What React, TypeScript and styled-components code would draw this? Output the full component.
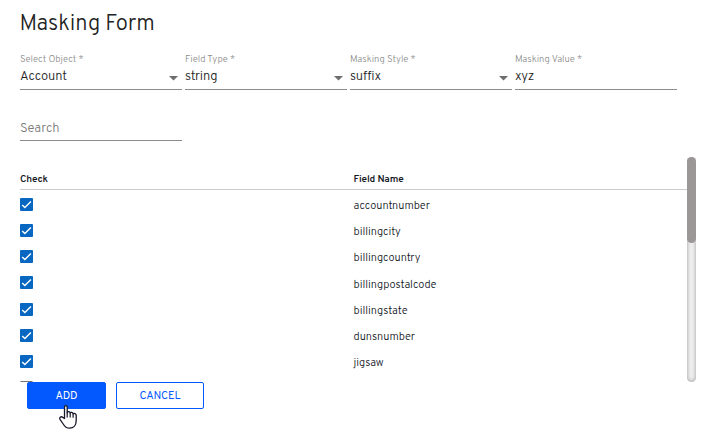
import React from "react";
import styled, { createGlobalStyle } from "styled-components";

const GlobalStyle = createGlobalStyle`
  * { box-sizing: border-box; }
  body {
    margin: 0;
    background: #fff;
    overflow: hidden;
    font-family: Overpass, Roboto, "Liberation Sans", sans-serif;
  }
`;

const Page = styled.main`
  width: 715px;
  height: 448px;
  padding: 10px 0 0 20px;
`;

const Title = styled.h1`
  margin: 0 0 0 -0.5px;
  height: 43px;
  line-height: 29px;
  font-size: 22px;
  font-weight: 300;
  letter-spacing: 0;
  color: #222;
`;

const FieldRow = styled.div`
  display: flex;
  gap: 3px;
`;

const Field = styled.div`
  width: 162px;
  height: 37px;
  padding-top: 1px;
  border-bottom: 1px solid #8c8c8c;
`;

const Label = styled.div`
  height: 14px;
  line-height: 13px;
  font-size: 9.5px;
  font-weight: 300;
  color: #8c8c8c;
`;

const Value = styled.div`
  display: flex;
  justify-content: space-between;
  height: 18px;
  line-height: 18px;
  font-size: 13px;
  font-weight: 300;
  letter-spacing: -0.12px;
  color: #222;
`;

const Arrow = styled.svg`
  display: block;
  margin: 8px 4px 0 0;
  fill: #6d6d6d;
`;

const Search = styled.div`
  width: 162px;
  height: 23px;
  margin-top: 28px;
  border-bottom: 1px solid #8c8c8c;
  font-size: 13px;
  font-weight: 300;
  line-height: 22px;
  color: #7a7a7a;
`;

const TablePanel = styled.section`
  display: flex;
  width: 676px;
  height: 225px;
  margin-top: 16px;
  overflow: hidden;
`;

const Table = styled.div`
  width: 667px;
`;

const HeaderRow = styled.div`
  display: grid;
  grid-template-columns: 333.5px 1fr;
  height: 33px;
  padding-top: 14px;
  border-bottom: 1px solid #c9cbcf;
  font-size: 10px;
  line-height: 18px;
  font-weight: 600;
  letter-spacing: -0.17px;
  color: #16191f;
`;

const Row = styled.div`
  display: grid;
  grid-template-columns: 333.5px 1fr;
  align-items: start;
  height: 26.15px;
  padding-top: 8px;
`;

const Name = styled.span`
  margin-top: 1.1px;
  font-size: 11px;
  font-weight: 300;
  line-height: 15px;
  letter-spacing: -0.02px;
  color: #10151c;
`;

const CheckBox = styled.span<{ $checked: boolean }>`
  display: block;
  width: 13px;
  height: 13px;
  border-radius: 1px;
  border: ${(p) => (p.$checked ? "0" : "1px solid #757575")};
  background: ${(p) => (p.$checked ? "#0867c1" : "#fff")};
  svg { display: block; }
`;

const ScrollTrack = styled.div`
  width: 9px;
  height: 225px;
  border-radius: 5px;
  background: #f1f0f0;
  box-shadow: inset 0 0 4px #999;
`;

const ScrollThumb = styled.div`
  height: 86px;
  border-radius: 5px;
  background: #9c9797;
`;

const Actions = styled.footer`
  display: flex;
  gap: 10px;
  padding-left: 7px;
`;

const Button = styled.button<{ $primary?: boolean }>`
  width: ${(p) => (p.$primary ? 79 : 88)}px;
  height: 27px;
  padding: 1px 0 0;
  border: 1px solid #0459fe;
  border-radius: 2px;
  background: ${(p) => (p.$primary ? "#0459fe" : "#fff")};
  color: ${(p) => (p.$primary ? "#fff" : "#0459fe")};
  font-family: inherit;
  font-size: 11px;
  line-height: 25px;
  letter-spacing: -0.1px;
`;

const Pointer = styled.svg`
  position: absolute;
  left: 58px;
  top: 404px;
`;

const fields = [
  { label: "Select Object *", value: "Account", menu: true },
  { label: "Field Type *", value: "string", menu: true },
  { label: "Masking Style *", value: "suffix", menu: true },
  { label: "Masking Value *", value: "xyz", menu: false },
];

const rows = [
  "accountnumber",
  "billingcity",
  "billingcountry",
  "billingpostalcode",
  "billingstate",
  "dunsnumber",
  "jigsaw",
];

export default function App() {
  return (
    <>
      <GlobalStyle />
      <Page>
        <Title>Masking Form</Title>
        <FieldRow>
          {fields.map((f) => (
            <Field key={f.label}>
              <Label>{f.label}</Label>
              <Value>
                <span>{f.value}</span>
                {f.menu && (
                  <Arrow width="9" height="5" viewBox="0 0 9 5">
                    <path d="M0 0H9L4.5 4.5Z" />
                  </Arrow>
                )}
              </Value>
            </Field>
          ))}
        </FieldRow>
        <Search>Search</Search>
        <TablePanel>
          <Table>
            <HeaderRow>
              <span>Check</span>
              <span>Field Name</span>
            </HeaderRow>
            {rows.map((name) => (
              <Row key={name}>
                <CheckBox $checked>
                  <svg width="13" height="13" viewBox="0 0 13 13">
                    <path d="M2.2 6.9 4.9 9.5 10.9 3.5" fill="none" stroke="#fff" strokeWidth="1.4" />
                  </svg>
                </CheckBox>
                <Name>{name}</Name>
              </Row>
            ))}
            <Row>
              <CheckBox $checked={false} />
            </Row>
          </Table>
          <ScrollTrack>
            <ScrollThumb />
          </ScrollTrack>
        </TablePanel>
        <Actions>
          <Button $primary>ADD</Button>
          <Button>CANCEL</Button>
        </Actions>
        <Pointer width="20" height="26" viewBox="0 0 20 26">
          <path
            d="M6.5 14.5V3.2C6.5 1 9.2 1 9.2 3.2V8.8C9.7 7.2 12 7.4 12.2 9C12.8 7.9 14.9 8.2 15.1 9.8C16.2 9 18.2 9.4 18.2 11.3V16.5C18.2 21.4 15.7 24.2 11.5 24.2C8 24.2 6.7 22.5 5.2 20L2 15.3C.9 13.6 2.9 12.1 4.4 13.1Z"
            fill="#fff"
            stroke="#16162a"
            strokeWidth="1.3"
            strokeLinejoin="round"
          />
          <path d="M9.2 8.5V13.5M12.2 9V13.5M15.1 9.8V13.8" fill="none" stroke="#16162a" strokeWidth="1.2" />
        </Pointer>
      </Page>
    </>
  );
}
